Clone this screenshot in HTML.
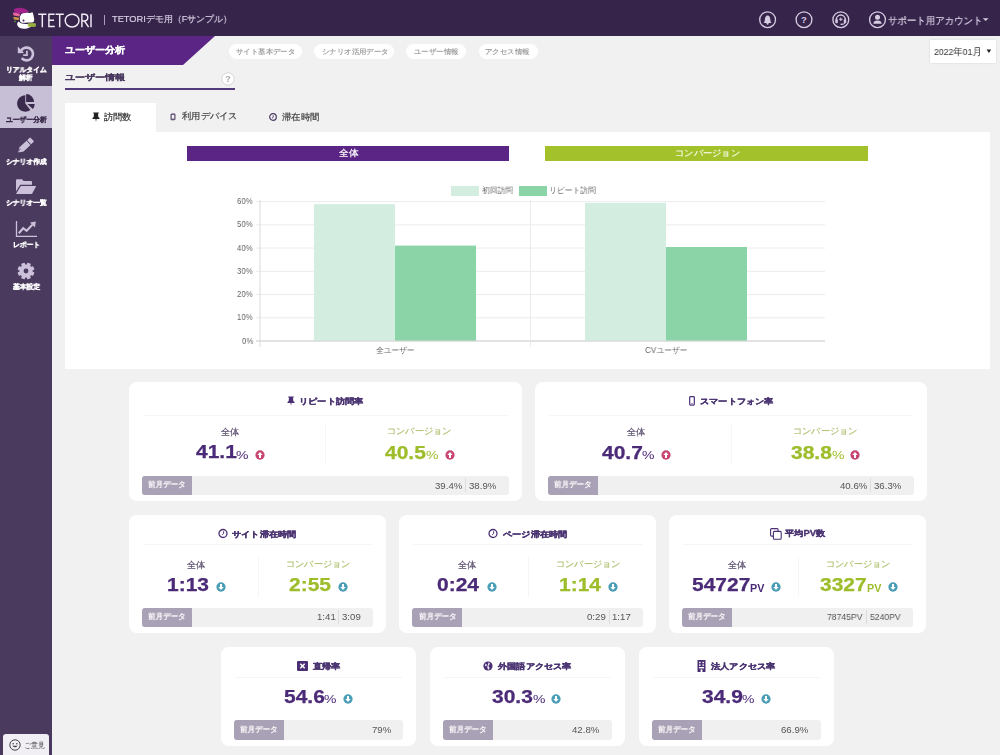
<!DOCTYPE html><html><head><meta charset="utf-8"><style>*{box-sizing:border-box;margin:0;padding:0}
html,body{width:1000px;height:755px;overflow:hidden;background:#f1f1f1;font-family:"Liberation Sans",sans-serif;position:relative}
.a{position:absolute}
.nw{white-space:nowrap}
.sl{position:absolute;left:0;width:52px;text-align:center;font-size:7.5px;font-weight:bold;color:#fff;line-height:9px;white-space:nowrap}
.pill{position:absolute;top:43.5px;height:15.5px;border-radius:8px;background:#fff;color:#9a9a9a;font-size:8.5px;line-height:16px;text-align:center;white-space:nowrap}
.tab{position:absolute;top:103px;height:29px;font-size:10.5px;color:#333;line-height:29px;white-space:nowrap}
.card{position:absolute;background:#fff;border-radius:8px}
.sep{position:absolute;height:1px;background:#f5f4f6}
.bar{position:absolute;height:19.5px;background:#f0f0f0;border-radius:3px;overflow:hidden}
.bar .bl{position:absolute;left:0;top:0;height:19.5px;width:50px;background:#a9a1b5;color:#fff;font-size:8.5px;line-height:19.5px;padding-left:5px;white-space:nowrap}
.bar .bv{position:absolute;top:0;height:19.5px;line-height:19.5px;font-size:9.5px;color:#555;white-space:nowrap}
.bar .bs{position:absolute;top:3px;width:1px;height:13px;background:#dcdcdc}
.t{position:absolute;white-space:nowrap;line-height:40px;transform-origin:0 0;will-change:transform}
</style></head><body><div class="a" style="left:0;top:0;width:1000px;height:36px;background:#37244b"></div>
<svg class="a" style="left:10px;top:5px" width="28" height="26" viewBox="10 5 28 26">
<path d="M14 9.2 Q15.5 7.8 19 7.7 Q23.5 7.6 26 9.2 Q28.2 10.5 28.7 11.6 L27 12.8 Q23 13.6 19.9 13.6 Q16.5 13.4 14.4 12.5 Z" fill="#a0228a"/>
<path d="M12.8 12.6 Q16.5 13 19.9 13.8 L19.5 16.4 Q16.5 15.8 13.6 15.4 Z" fill="#e8679c"/>
<path d="M13.2 17.1 Q16.2 17.3 19.1 17.8 L18.7 20 Q16.2 19.7 14 19.5 Z" fill="#d99a48"/>
<path d="M14 20.7 H16 L15.6 22.3 L14.4 22 Z" fill="#5f9a3c"/>
<path d="M20 16.5 Q20.8 13.6 23 13.2 Q26.5 12.5 31 13.1 L31.8 12 L32.7 12.5 Q33.6 15 34.2 18.8 Q34.4 21.2 33.4 22 Q31.8 22.9 28.7 22.4 Q25 22.9 21.9 22.8 Q19.8 22 19.8 19.5 Z" fill="#ffffff"/>
<path d="M18.3 21.6 Q16.8 23.5 17.2 25 Q18 27.5 20.5 28.3 Q23.5 29 27 28.4 Q30 27.6 31 26.5 Q30.5 24.8 29 24.3 Q26 24 22 23.6 Q20 23.2 19.5 22.3 Z" fill="#ffffff"/>
<circle cx="23.5" cy="20.4" r="1" fill="#37244b"/>
<rect x="27.9" y="23.3" width="7.9" height="3.4" rx="0.8" fill="#a4c23c"/>
<g fill="#37244b" opacity="0.6"><circle cx="30" cy="25" r="0.5"/><circle cx="32" cy="25" r="0.5"/><circle cx="34" cy="25" r="0.5"/></g>
</svg>
<svg class="a" style="left:35px;top:8px" width="62" height="24" viewBox="35 8 62 24">
<g fill="none" stroke="#f0ebf5" stroke-width="1.45">
<path d="M38.2 14.2 H46.4 M42.3 14.2 V27.2"/>
<path d="M54.6 14.2 H48.9 V26.5 H54.8 M48.9 20.3 H54"/>
<path d="M55.6 14.2 H63.8 M59.7 14.2 V27.2"/>
<ellipse cx="72.1" cy="20.6" rx="6.9" ry="6.4"/>
<path d="M81.9 27.2 V14.2 H84.3 Q87.8 14.2 87.8 17.6 Q87.8 21 84.3 21 H82 M84.5 21 L88.6 27.2"/>
<path d="M91 14.2 V27.2"/>
</g></svg>
<div class="a" style="left:104.3px;top:15px;width:1px;height:9.5px;background:#a99cbc"></div>
<svg class="a" style="left:750px;top:0px" width="250" height="36" viewBox="750 0 250 36">
<g fill="none" stroke="#d6cce2" stroke-width="1.35">
<circle cx="767.6" cy="19.7" r="7.9"/><circle cx="804" cy="19.7" r="7.9"/><circle cx="840.8" cy="19.7" r="7.9"/><circle cx="877.5" cy="19.7" r="7.9"/>
</g>
<path d="M763.6 23 Q764.8 21.8 764.9 19.5 Q765 15.6 767.6 15.4 Q770.2 15.6 770.3 19.5 Q770.4 21.8 771.6 23 Z" fill="#d6cce2"/>
<circle cx="767.6" cy="23.6" r="1.1" fill="#d6cce2"/>
<text x="804" y="23.3" text-anchor="middle" font-family="Liberation Sans" font-weight="bold" font-size="9.5" fill="#d6cce2">?</text>
<path d="M836.3 22.2 V19.6 A4.5 4.5 0 0 1 845.3 19.6 V22.2" fill="none" stroke="#d6cce2" stroke-width="1.5"/>
<rect x="835.4" y="19.2" width="2.4" height="4" rx="0.8" fill="#d6cce2"/><rect x="843.8" y="19.2" width="2.4" height="4" rx="0.8" fill="#d6cce2"/>
<path d="M845 22.5 Q845 24.3 842 24.3" fill="none" stroke="#d6cce2" stroke-width="1"/><rect x="840.6" y="23.6" width="2" height="1.4" fill="#d6cce2"/>
<path d="M840.8 17.5 V21 M839 19.3 H842.6" stroke="#d6cce2" stroke-width="1"/>
<circle cx="877.5" cy="17.3" r="2.5" fill="#d6cce2"/>
<path d="M873.3 23.8 Q873.5 20.4 877.5 20.4 Q881.5 20.4 881.7 23.8 Z" fill="#d6cce2"/>
<path d="M982.8 18.2 H988.6 L985.7 21 Z" fill="#d6cce2"/>
</svg>
<div class="a" style="left:0;top:36px;width:52px;height:719px;background:#4a3a5e"></div>
<div class="a" style="left:0;top:86px;width:52px;height:42px;background:#c7bfd5"></div>
<svg class="a" style="left:0;top:36px" width="52" height="260" viewBox="0 36 52 260">
<path d="M21.70 58.11 A6.4 6.4 0 1 0 20.80 51.30" fill="none" stroke="#cbc1da" stroke-width="2.6"/>
<path d="M17.8 46.6 L17.8 53.3 L24 53.1 Z" fill="#cbc1da"/>
<path d="M26.9 50.8 V55.2 H23.2" fill="none" stroke="#cbc1da" stroke-width="1.8"/>
<g fill="#3a2a4c">
<path d="M25.3 103.5 L25.3 95.3 A8.2 8.2 0 1 0 30.35 109.96 Z"/>
<path d="M26.1 102.1 L26.1 94.1 A8 8 0 0 1 34.1 102.1 Z"/>
<path d="M27.4 104.1 L34.7 104.1 A7.3 7.3 0 0 1 32.82 108.98 Z"/>
</g>
<g fill="#cbc1da">
<path d="M18.20 152.60 L19.54 147.33 L26.51 140.71 L30.51 144.92 L23.54 151.54 Z"/>
<path d="M27.09 140.16 L29.49 137.89 Q30.14 137.27 30.76 137.92 L33.52 140.82 Q34.14 141.48 33.48 142.10 L31.09 144.37 Z"/>
</g>
<path d="M18.96 150.50 L20.56 148.98" stroke="#4a3a5e" stroke-2.9idth="1.1"/>
<g fill="#cbc1da">
<path d="M16 180.3 Q16 179.3 17 179.3 H22 L23.6 181 H31 Q32 181 32 182 V184.8 H20.2 L16 191.5 Z"/>
<path d="M20.8 186 H36.2 L32 194.1 H16 Z"/>
</g>
<path d="M16.5 221 V236.3 H37" fill="none" stroke="#cbc1da" stroke-width="1.3"/>
<path d="M18.8 233.2 L23.2 228.2 L26.6 230.8 L32.4 224.8" fill="none" stroke="#cbc1da" stroke-width="2.1"/>
<path d="M30 222.4 L35.8 221.6 L35 227.4 Z" fill="#cbc1da"/>
<g fill="#cbc1da">
<rect x="24.1" y="262.6" width="3.8" height="3.6" rx="0.5" transform="rotate(22.5 26 271)"/><rect x="24.1" y="262.6" width="3.8" height="3.6" rx="0.5" transform="rotate(67.5 26 271)"/><rect x="24.1" y="262.6" width="3.8" height="3.6" rx="0.5" transform="rotate(112.5 26 271)"/><rect x="24.1" y="262.6" width="3.8" height="3.6" rx="0.5" transform="rotate(157.5 26 271)"/><rect x="24.1" y="262.6" width="3.8" height="3.6" rx="0.5" transform="rotate(202.5 26 271)"/><rect x="24.1" y="262.6" width="3.8" height="3.6" rx="0.5" transform="rotate(247.5 26 271)"/><rect x="24.1" y="262.6" width="3.8" height="3.6" rx="0.5" transform="rotate(292.5 26 271)"/><rect x="24.1" y="262.6" width="3.8" height="3.6" rx="0.5" transform="rotate(337.5 26 271)"/>
<circle cx="26" cy="271" r="6.6"/>
</g>
<circle cx="26" cy="271" r="2.4" fill="#4a3a5e"/>
</svg>
<div class="a" style="left:3px;top:734px;width:46px;height:21px;background:#f1eff3;border-radius:3px 3px 0 0"></div>
<svg class="a" style="left:9px;top:739px" width="12" height="12" viewBox="0 0 12 12"><circle cx="6" cy="6" r="5.2" fill="none" stroke="#444" stroke-width="1"/><circle cx="4.2" cy="4.8" r="0.8" fill="#444"/><circle cx="7.8" cy="4.8" r="0.8" fill="#444"/><path d="M3.3 6.8 Q6 9.8 8.7 6.8 Z" fill="#444"/></svg>

<svg class="a" style="left:52px;top:36px" width="165" height="29" viewBox="0 0 165 29"><path d="M0 0 H163 L131 29 H0 Z" fill="#5b2585"/></svg>
<div class="pill" style="left:228.5px;width:73.5px"></div>
<div class="pill" style="left:313.5px;width:80.5px"></div>
<div class="pill" style="left:406px;width:59.5px"></div>
<div class="pill" style="left:478.5px;width:59.5px"></div>
<div class="a" style="left:930px;top:40px;width:66px;height:23px;background:#fff;box-shadow:0 0 2px rgba(0,0,0,0.12)"></div>
<svg class="a" style="left:986px;top:49px" width="6" height="4" viewBox="0 0 6 4"><path d="M0.6 0.4 H5.2 L2.9 4 Z" fill="#222"/></svg>
<div class="a" style="left:65px;top:87.6px;width:170px;height:2px;background:#533b7e"></div>
<svg class="a" style="left:221px;top:72.3px;will-change:transform" width="14" height="14" viewBox="0 0 14 14"><circle cx="7" cy="7" r="6.2" fill="#fff" stroke="#d0d0d0" stroke-width="0.9"/><text x="7" y="10.4" text-anchor="middle" font-family="Liberation Sans" font-weight="bold" font-size="9" fill="#a8a8a8">?</text></svg>
<div class="a" style="left:65px;top:132px;width:925px;height:237px;background:#fff"></div>
<div class="a" style="left:65px;top:103px;width:91px;height:30px;background:#fff"></div>
<svg class="a" style="left:92px;top:112px" width="8" height="10" viewBox="0 0 8 10"><path d="M1.2 0.5 H6.8 V1.5 H6 L6.3 5 L7.5 6 V7 H4.5 L4 10 L3.5 7 H0.5 V6 L1.7 5 L2 1.5 H1.2 Z" fill="#222"/></svg>
<svg class="a" style="left:170px;top:113px" width="6" height="8" viewBox="0 0 6 8"><rect x="1.1" y="1.1" width="3.8" height="5.6" rx="0.6" fill="none" stroke="#4a3a60" stroke-width="1.1"/><rect x="2.4" y="5.4" width="1.2" height="0.7" fill="#4a3a60"/></svg>
<svg class="a" style="left:268.4px;top:111.6px" width="10" height="10" viewBox="0 0 10 10"><circle cx="5" cy="5" r="3.3" fill="none" stroke="#4a3a60" stroke-width="1.2"/><path d="M5.2 3.3 V5.3 L3.9 6.3" fill="none" stroke="#4a3a60" stroke-width="0.9"/></svg>
<div class="a" style="left:187px;top:146px;width:322px;height:15px;background:#5b2585;color:#fff;font-size:10px;line-height:15px;text-align:center"></div>
<div class="a" style="left:545px;top:146px;width:323px;height:15px;background:#a2c12a;color:#fff;font-size:10px;line-height:15px;text-align:center"></div>
<svg class="a" style="left:0;top:0" width="1000" height="370" viewBox="0 0 1000 370">
<line x1="256" y1="341.0" x2="825" y2="341.0" stroke="#d9d9d9" stroke-width="1"/><line x1="256" y1="317.8" x2="825" y2="317.8" stroke="#ececec" stroke-width="1"/><line x1="256" y1="294.6" x2="825" y2="294.6" stroke="#ececec" stroke-width="1"/><line x1="256" y1="271.3" x2="825" y2="271.3" stroke="#ececec" stroke-width="1"/><line x1="256" y1="248.1" x2="825" y2="248.1" stroke="#ececec" stroke-width="1"/><line x1="256" y1="224.9" x2="825" y2="224.9" stroke="#ececec" stroke-width="1"/><line x1="256" y1="201.7" x2="825" y2="201.7" stroke="#ececec" stroke-width="1"/>
<line x1="260" y1="200" x2="260" y2="347" stroke="#d9d9d9" stroke-width="1"/>
<line x1="530.5" y1="200" x2="530.5" y2="347" stroke="#ececec" stroke-width="1"/>
<rect x="314" y="204.2" width="81" height="136.8" fill="#d3ede0"/><rect x="395" y="245.6" width="81" height="95.4" fill="#8bd4a8"/><rect x="585" y="202.8" width="81" height="138.2" fill="#d3ede0"/><rect x="666" y="247.0" width="81" height="94.0" fill="#8bd4a8"/>
<line x1="256" y1="341" x2="825" y2="341" stroke="#d9d9d9" stroke-width="1"/>
<rect x="451" y="186" width="28" height="10" fill="#d3ede0"/>
<rect x="519" y="186" width="28" height="10" fill="#8bd4a8"/>
</svg>
<div class="card" style="left:129px;top:382px;width:392.5px;height:119px"></div>
<div class="sep" style="left:143px;top:415px;width:364.5px"></div>
<div class="a" style="left:325.2px;top:423.7px;width:1px;height:40px;background:#f6f6f6"></div>
<div class="card" style="left:535px;top:382px;width:391.5px;height:119px"></div>
<div class="sep" style="left:549px;top:415px;width:363.5px"></div>
<div class="a" style="left:730.8px;top:423.7px;width:1px;height:40px;background:#f6f6f6"></div>
<div class="card" style="left:129px;top:515px;width:257px;height:118px"></div>
<div class="sep" style="left:143px;top:543.5px;width:229px"></div>
<div class="a" style="left:257.5px;top:556.5px;width:1px;height:40px;background:#f6f6f6"></div>
<div class="card" style="left:399.4px;top:515px;width:256.6px;height:118px"></div>
<div class="sep" style="left:413.4px;top:543.5px;width:228.60000000000002px"></div>
<div class="a" style="left:527.7px;top:556.5px;width:1px;height:40px;background:#f6f6f6"></div>
<div class="card" style="left:669.2px;top:515px;width:256.79999999999995px;height:118px"></div>
<div class="sep" style="left:683.2px;top:543.5px;width:228.79999999999995px"></div>
<div class="a" style="left:797.6px;top:556.5px;width:1px;height:40px;background:#f6f6f6"></div>
<div class="card" style="left:221.3px;top:647.4px;width:195.0px;height:99px"></div>
<div class="sep" style="left:235.3px;top:676.9px;width:167.0px"></div>
<div class="card" style="left:429.5px;top:647.4px;width:195.0px;height:99px"></div>
<div class="sep" style="left:443.5px;top:676.9px;width:167.0px"></div>
<div class="card" style="left:639px;top:647.4px;width:195px;height:99px"></div>
<div class="sep" style="left:653px;top:676.9px;width:167px"></div>
<svg class="a" style="left:286.9px;top:396.3px" width="8" height="10" viewBox="0 0 8 10"><path d="M1.2 0.5 H6.8 V1.5 H6 L6.3 5 L7.5 6 V7 H4.5 L4 10 L3.5 7 H0.5 V6 L1.7 5 L2 1.5 H1.2 Z" fill="#4b2f74"/></svg>
<svg class="a" style="left:688.5px;top:396.3px" width="6" height="10" viewBox="0 0 6 10"><rect x="0.7" y="0.7" width="4.6" height="8.4" rx="0.8" fill="none" stroke="#4b2f74" stroke-width="1.2"/><rect x="2.3" y="7.3" width="1.4" height="0.8" fill="#4b2f74"/></svg>
<svg class="a" style="left:218.4px;top:528.3px" width="11" height="11" viewBox="0 0 11 11"><circle cx="5" cy="5.5" r="4" fill="none" stroke="#4b2f74" stroke-width="1.3"/><path d="M5.6 3.3 V5.6 L4.2 6.8" fill="none" stroke="#4b2f74" stroke-width="1"/></svg>
<svg class="a" style="left:488.48px;top:528.3px" width="11" height="11" viewBox="0 0 11 11"><circle cx="5" cy="5.5" r="4" fill="none" stroke="#4b2f74" stroke-width="1.3"/><path d="M5.6 3.3 V5.6 L4.2 6.8" fill="none" stroke="#4b2f74" stroke-width="1"/></svg>
<svg class="a" style="left:769.6px;top:527.8px" width="12" height="12" viewBox="0 0 12 12"><rect x="0.6" y="0.6" width="7.5" height="7.5" rx="1" fill="#fff" stroke="#4b2f74" stroke-width="1.1"/><rect x="3.4" y="3.4" width="7.8" height="7.8" rx="1" fill="#fff" stroke="#4b2f74" stroke-width="1.1"/></svg>
<svg class="a" style="left:297.08px;top:660.8px" width="11" height="10" viewBox="0 0 11 10"><rect x="0" y="0" width="11" height="10" rx="1" fill="#4b2f74"/><path d="M3.3 2.8 L7.7 7.2 M7.7 2.8 L3.3 7.2" stroke="#fff" stroke-width="1.5"/></svg>
<svg class="a" style="left:482.62px;top:660.8px" width="10" height="10" viewBox="0 0 10 10"><circle cx="5" cy="5" r="4.6" fill="#4b2f74"/><path d="M2.5 2.5 Q4 3 3.8 4.6 Q3 5.5 2 5 Z M5.5 1.2 Q7.5 2 6.5 3.5 Q5.5 4 5.6 5.5 Q7 6 6.3 8 Q5.5 9 5 8.8 Q4.6 7 4.2 6.5" fill="#fff" opacity="0.9"/></svg>
<svg class="a" style="left:697.05px;top:659.8px" width="9" height="12" viewBox="0 0 9 12"><rect x="0.5" y="0" width="8" height="12" rx="0.5" fill="#4b2f74"/><g fill="#fff"><rect x="2" y="1.8" width="1.6" height="1.4"/><rect x="5.4" y="1.8" width="1.6" height="1.4"/><rect x="2" y="4.4" width="1.6" height="1.4"/><rect x="5.4" y="4.4" width="1.6" height="1.4"/><rect x="2" y="7" width="5" height="1.4"/><rect x="3.6" y="9.4" width="1.8" height="2.6"/></g></svg>
<div class="bar" style="left:142px;top:475.9px;width:366.5px;height:18.8px"><div class="bl" style="height:18.8px"></div></div>
<div class="bar" style="left:548px;top:475.9px;width:365.5px;height:18.8px"><div class="bl" style="height:18.8px"></div></div>
<div class="bar" style="left:142px;top:607.5px;width:231px;height:19.3px"><div class="bl" style="height:19.3px"></div></div>
<div class="bar" style="left:412.4px;top:607.5px;width:230.60000000000002px;height:19.3px"><div class="bl" style="height:19.3px"></div></div>
<div class="bar" style="left:682.2px;top:607.5px;width:230.79999999999995px;height:19.3px"><div class="bl" style="height:19.3px"></div></div>
<div class="bar" style="left:234.3px;top:720.3px;width:169.0px;height:19.4px"><div class="bl" style="height:19.4px"></div></div>
<div class="bar" style="left:442.5px;top:720.3px;width:169.0px;height:19.4px"><div class="bl" style="height:19.4px"></div></div>
<div class="bar" style="left:652px;top:720.3px;width:169px;height:19.4px"><div class="bl" style="height:19.4px"></div></div>
<div class="a" style="left:465.25px;top:478.4px;width:1px;height:13.8px;background:#dddddd"></div>
<div class="a" style="left:870.25px;top:478.4px;width:1px;height:13.8px;background:#dddddd"></div>
<div class="a" style="left:338.25px;top:610.0px;width:1px;height:14.3px;background:#dddddd"></div>
<div class="a" style="left:608.5px;top:610.0px;width:1px;height:14.3px;background:#dddddd"></div>
<div class="a" style="left:865.75px;top:610.0px;width:1px;height:14.3px;background:#dddddd"></div>
<svg class="a" style="left:255.10px;top:450.10px" width="10" height="10" viewBox="0 0 10 10"><circle cx="5" cy="5" r="4.65" fill="#c8456f"/><path d="M5 2.1 L7.7 5 H6 V7.9 H4 V5 H2.3 Z" fill="#fff"/></svg>
<svg class="a" style="left:444.60px;top:450.10px" width="10" height="10" viewBox="0 0 10 10"><circle cx="5" cy="5" r="4.65" fill="#c8456f"/><path d="M5 2.1 L7.7 5 H6 V7.9 H4 V5 H2.3 Z" fill="#fff"/></svg>
<svg class="a" style="left:660.97px;top:450.10px" width="10" height="10" viewBox="0 0 10 10"><circle cx="5" cy="5" r="4.65" fill="#c8456f"/><path d="M5 2.1 L7.7 5 H6 V7.9 H4 V5 H2.3 Z" fill="#fff"/></svg>
<svg class="a" style="left:850.47px;top:450.10px" width="10" height="10" viewBox="0 0 10 10"><circle cx="5" cy="5" r="4.65" fill="#c8456f"/><path d="M5 2.1 L7.7 5 H6 V7.9 H4 V5 H2.3 Z" fill="#fff"/></svg>
<svg class="a" style="left:215.50px;top:582.40px" width="10" height="10" viewBox="0 0 10 10"><circle cx="5" cy="5" r="4.65" fill="#4b9db6"/><path d="M5 7.9 L7.7 5 H6 V2.1 H4 V5 H2.3 Z" fill="#fff"/></svg>
<svg class="a" style="left:337.98px;top:582.40px" width="10" height="10" viewBox="0 0 10 10"><circle cx="5" cy="5" r="4.65" fill="#4b9db6"/><path d="M5 7.9 L7.7 5 H6 V2.1 H4 V5 H2.3 Z" fill="#fff"/></svg>
<svg class="a" style="left:486.52px;top:582.40px" width="10" height="10" viewBox="0 0 10 10"><circle cx="5" cy="5" r="4.65" fill="#4b9db6"/><path d="M5 7.9 L7.7 5 H6 V2.1 H4 V5 H2.3 Z" fill="#fff"/></svg>
<svg class="a" style="left:608.37px;top:582.40px" width="10" height="10" viewBox="0 0 10 10"><circle cx="5" cy="5" r="4.65" fill="#4b9db6"/><path d="M5 7.9 L7.7 5 H6 V2.1 H4 V5 H2.3 Z" fill="#fff"/></svg>
<svg class="a" style="left:771.18px;top:582.40px" width="10" height="10" viewBox="0 0 10 10"><circle cx="5" cy="5" r="4.65" fill="#4b9db6"/><path d="M5 7.9 L7.7 5 H6 V2.1 H4 V5 H2.3 Z" fill="#fff"/></svg>
<svg class="a" style="left:887.53px;top:582.40px" width="10" height="10" viewBox="0 0 10 10"><circle cx="5" cy="5" r="4.65" fill="#4b9db6"/><path d="M5 7.9 L7.7 5 H6 V2.1 H4 V5 H2.3 Z" fill="#fff"/></svg>
<svg class="a" style="left:343.12px;top:694.40px" width="10" height="10" viewBox="0 0 10 10"><circle cx="5" cy="5" r="4.65" fill="#4b9db6"/><path d="M5 7.9 L7.7 5 H6 V2.1 H4 V5 H2.3 Z" fill="#fff"/></svg>
<svg class="a" style="left:551.45px;top:694.40px" width="10" height="10" viewBox="0 0 10 10"><circle cx="5" cy="5" r="4.65" fill="#4b9db6"/><path d="M5 7.9 L7.7 5 H6 V2.1 H4 V5 H2.3 Z" fill="#fff"/></svg>
<svg class="a" style="left:760.95px;top:694.40px" width="10" height="10" viewBox="0 0 10 10"><circle cx="5" cy="5" r="4.65" fill="#4b9db6"/><path d="M5 7.9 L7.7 5 H6 V2.1 H4 V5 H2.3 Z" fill="#fff"/></svg>
<div class="t" style="left:112.45px;top:-0.55px;font-size:9.268px;-webkit-text-stroke:0.2px #d8cfe3;color:#d8cfe3;transform:scaleX(0.9986)">TETORIデモ用（Fサンプル）</div>
<div class="t" style="left:888.2px;top:0.55px;font-size:10.111px;-webkit-text-stroke:0.2px #d8cfe3;color:#d8cfe3;transform:scaleX(0.9448)">サポート用アカウント</div>
<div class="t" style="left:64.75px;top:29.5px;font-size:8.5px;font-weight:bold;-webkit-text-stroke:0.3px #ffffff;color:#ffffff;transform:scaleX(1.1198)">ユーザー分析</div>
<div class="t" style="left:64.75px;top:57.55px;font-size:7.512px;font-weight:bold;-webkit-text-stroke:0.3px #4b3a60;color:#4b3a60;transform:scaleX(1.262)">ユーザー情報</div>
<div class="t" style="left:235.65px;top:32.4px;font-size:6.5px;font-weight:bold;color:#a3a3a3;transform:scaleX(1.055)">サイト基本データ</div>
<div class="t" style="left:321.58px;top:32.4px;font-size:6.5px;font-weight:bold;color:#a3a3a3;transform:scaleX(1.055)">シナリオ活用データ</div>
<div class="t" style="left:414.3px;top:32.4px;font-size:6.5px;font-weight:bold;color:#a3a3a3;transform:scaleX(1.055)">ユーザー情報</div>
<div class="t" style="left:485.48px;top:32.4px;font-size:6.5px;font-weight:bold;color:#a3a3a3;transform:scaleX(1.055)">アクセス情報</div>
<div class="t" style="left:934.3px;top:32.3px;font-size:9.514px;color:#333333;transform:scaleX(0.9181)">2022年01月</div>
<div class="t" style="left:104.2px;top:96.95px;font-size:9.263px;-webkit-text-stroke:0.2px #333333;color:#333333;transform:scaleX(1.0243)">訪問数</div>
<div class="t" style="left:181.8px;top:96.45px;font-size:9.026px;-webkit-text-stroke:0.2px #444444;color:#444444;transform:scaleX(1.0288)">利用デバイス</div>
<div class="t" style="left:282.15px;top:96.65px;font-size:8.821px;-webkit-text-stroke:0.2px #444444;color:#444444;transform:scaleX(1.0481)">滞在時間</div>
<div class="t" style="left:338.55px;top:133.2px;font-size:8.649px;-webkit-text-stroke:0.2px #ffffff;color:#ffffff;transform:scaleX(1.0851)">全体</div>
<div class="t" style="left:674.5px;top:132.5px;font-size:9.091px;-webkit-text-stroke:0.2px #f3f7dc;color:#f3f7dc;transform:scaleX(1.0313)">コンバージョン</div>
<div class="t" style="left:237.1px;top:180.95px;font-size:9.792px;color:#666666;transform:scaleX(0.7992)">60%</div>
<div class="t" style="left:241.6px;top:320.55px;font-size:9.792px;color:#666666;transform:scaleX(0.7992)">0%</div>
<div class="t" style="left:237.1px;top:297.33px;font-size:9.792px;color:#666666;transform:scaleX(0.7992)">10%</div>
<div class="t" style="left:237.1px;top:274.11px;font-size:9.792px;color:#666666;transform:scaleX(0.7992)">20%</div>
<div class="t" style="left:237.1px;top:250.89px;font-size:9.792px;color:#666666;transform:scaleX(0.7992)">30%</div>
<div class="t" style="left:237.1px;top:227.67px;font-size:9.792px;color:#666666;transform:scaleX(0.7992)">40%</div>
<div class="t" style="left:237.1px;top:204.45px;font-size:9.792px;color:#666666;transform:scaleX(0.7992)">50%</div>
<div class="t" style="left:375.75px;top:329.75px;font-size:8.471px;color:#666666;transform:scaleX(0.9619)">全ユーザー</div>
<div class="t" style="left:644.55px;top:329.75px;font-size:8.471px;color:#666666;transform:scaleX(0.9619)">CVユーザー</div>
<div class="t" style="left:482.35px;top:171.2px;font-size:7.714px;color:#666666;transform:scaleX(0.9788)">初回訪問</div>
<div class="t" style="left:548.85px;top:171.2px;font-size:7.714px;color:#666666;transform:scaleX(0.9788)">リピート訪問</div>
<div class="t" style="left:5.65px;top:49.5px;font-size:6.569px;font-weight:bold;-webkit-text-stroke:0.3px #ffffff;color:#ffffff;transform:scaleX(0.9699)">リアルタイム</div>
<div class="t" style="left:19.4px;top:58.0px;font-size:6.569px;font-weight:bold;-webkit-text-stroke:0.3px #ffffff;color:#ffffff;transform:scaleX(0.9699)">解析</div>
<div class="t" style="left:5.77px;top:100.4px;font-size:6.569px;font-weight:bold;-webkit-text-stroke:0.3px #3a2a4c;color:#3a2a4c;transform:scaleX(0.9699)">ユーザー分析</div>
<div class="t" style="left:5.82px;top:141.8px;font-size:6.569px;font-weight:bold;-webkit-text-stroke:0.3px #ffffff;color:#ffffff;transform:scaleX(0.9699)">シナリオ作成</div>
<div class="t" style="left:5.95px;top:183.25px;font-size:6.569px;font-weight:bold;-webkit-text-stroke:0.3px #ffffff;color:#ffffff;transform:scaleX(0.9699)">シナリオ一覧</div>
<div class="t" style="left:13.2px;top:224.95px;font-size:6.569px;font-weight:bold;-webkit-text-stroke:0.3px #ffffff;color:#ffffff;transform:scaleX(0.9699)">レポート</div>
<div class="t" style="left:12.88px;top:266.8px;font-size:6.569px;font-weight:bold;-webkit-text-stroke:0.3px #ffffff;color:#ffffff;transform:scaleX(0.9699)">基本設定</div>
<div class="t" style="left:23.75px;top:725.75px;font-size:7.778px;color:#444444;transform:scaleX(0.8664)">ご意見</div>
<div class="t" style="left:221.15px;top:412.2px;font-size:9.212px;-webkit-text-stroke:0.15px #55486a;color:#55486a;transform:scaleX(1.0251)">全体</div>
<div class="t" style="left:387.15px;top:411.2px;font-size:9.212px;-webkit-text-stroke:0.15px #adc06f;color:#adc06f;transform:scaleX(1.0251)">コンバージョン</div>
<div class="t" style="left:148.15px;top:465.45px;font-size:7.845px;-webkit-text-stroke:0.25px #ffffff;color:#ffffff;transform:scaleX(0.9405)">前月データ</div>
<div class="t" style="left:627.15px;top:412.2px;font-size:9.212px;-webkit-text-stroke:0.15px #55486a;color:#55486a;transform:scaleX(1.0251)">全体</div>
<div class="t" style="left:793.15px;top:411.2px;font-size:9.212px;-webkit-text-stroke:0.15px #adc06f;color:#adc06f;transform:scaleX(1.0251)">コンバージョン</div>
<div class="t" style="left:554.15px;top:465.45px;font-size:7.845px;-webkit-text-stroke:0.25px #ffffff;color:#ffffff;transform:scaleX(0.9405)">前月データ</div>
<div class="t" style="left:187.35px;top:545.0px;font-size:9.212px;-webkit-text-stroke:0.15px #55486a;color:#55486a;transform:scaleX(1.0251)">全体</div>
<div class="t" style="left:285.95px;top:544.0px;font-size:9.212px;-webkit-text-stroke:0.15px #adc06f;color:#adc06f;transform:scaleX(1.0251)">コンバージョン</div>
<div class="t" style="left:148.15px;top:597.05px;font-size:7.845px;-webkit-text-stroke:0.25px #ffffff;color:#ffffff;transform:scaleX(0.9405)">前月データ</div>
<div class="t" style="left:457.75px;top:545.0px;font-size:9.212px;-webkit-text-stroke:0.15px #55486a;color:#55486a;transform:scaleX(1.0251)">全体</div>
<div class="t" style="left:556.35px;top:544.0px;font-size:9.212px;-webkit-text-stroke:0.15px #adc06f;color:#adc06f;transform:scaleX(1.0251)">コンバージョン</div>
<div class="t" style="left:418.55px;top:597.05px;font-size:7.845px;-webkit-text-stroke:0.25px #ffffff;color:#ffffff;transform:scaleX(0.9405)">前月データ</div>
<div class="t" style="left:727.55px;top:545.0px;font-size:9.212px;-webkit-text-stroke:0.15px #55486a;color:#55486a;transform:scaleX(1.0251)">全体</div>
<div class="t" style="left:826.15px;top:544.0px;font-size:9.212px;-webkit-text-stroke:0.15px #adc06f;color:#adc06f;transform:scaleX(1.0251)">コンバージョン</div>
<div class="t" style="left:688.35px;top:597.05px;font-size:7.845px;-webkit-text-stroke:0.25px #ffffff;color:#ffffff;transform:scaleX(0.9405)">前月データ</div>
<div class="t" style="left:240.45px;top:709.85px;font-size:7.845px;-webkit-text-stroke:0.25px #ffffff;color:#ffffff;transform:scaleX(0.9405)">前月データ</div>
<div class="t" style="left:448.65px;top:709.85px;font-size:7.845px;-webkit-text-stroke:0.25px #ffffff;color:#ffffff;transform:scaleX(0.9405)">前月データ</div>
<div class="t" style="left:658.15px;top:709.85px;font-size:7.845px;-webkit-text-stroke:0.25px #ffffff;color:#ffffff;transform:scaleX(0.9405)">前月データ</div>
<div class="t" style="left:299.1px;top:381.25px;font-size:8.293px;font-weight:bold;-webkit-text-stroke:0.3px #4b3572;color:#4b3572;transform:scaleX(1.1492)">リピート訪問率</div>
<div class="t" style="left:699.5px;top:381.25px;font-size:8.293px;font-weight:bold;-webkit-text-stroke:0.3px #4b3572;color:#4b3572;transform:scaleX(1.1492)">スマートフォン率</div>
<div class="t" style="left:232.35px;top:513.5px;font-size:8.293px;font-weight:bold;-webkit-text-stroke:0.3px #4b3572;color:#4b3572;transform:scaleX(1.1492)">サイト滞在時間</div>
<div class="t" style="left:502.68px;top:513.5px;font-size:8.293px;font-weight:bold;-webkit-text-stroke:0.3px #4b3572;color:#4b3572;transform:scaleX(1.1492)">ページ滞在時間</div>
<div class="t" style="left:785.1px;top:513.25px;font-size:8.293px;font-weight:bold;-webkit-text-stroke:0.3px #4b3572;color:#4b3572;transform:scaleX(1.1492)">平均PV数</div>
<div class="t" style="left:312.77px;top:645.75px;font-size:8.293px;font-weight:bold;-webkit-text-stroke:0.3px #4b3572;color:#4b3572;transform:scaleX(1.1492)">直帰率</div>
<div class="t" style="left:497.88px;top:645.75px;font-size:8.293px;font-weight:bold;-webkit-text-stroke:0.3px #4b3572;color:#4b3572;transform:scaleX(1.1492)">外国語アクセス率</div>
<div class="t" style="left:711.45px;top:645.75px;font-size:8.293px;font-weight:bold;-webkit-text-stroke:0.3px #4b3572;color:#4b3572;transform:scaleX(1.1492)">法人アクセス率</div>
<div class="t" style="left:195.8px;top:432.35px;font-size:17.788px;font-weight:bold;-webkit-text-stroke:0.25px #4b2a78;color:#4b2a78;transform:scaleX(1.1803)">41.1</div>
<div class="t" style="left:236.45px;top:434.8px;font-size:11.782px;color:#4b2a78;transform:scaleX(1.1857)">%</div>
<div class="t" style="left:385.3px;top:432.6px;font-size:17.788px;font-weight:bold;-webkit-text-stroke:0.25px #9dbd2b;color:#9dbd2b;transform:scaleX(1.1803)">40.5</div>
<div class="t" style="left:425.95px;top:434.8px;font-size:11.782px;color:#9dbd2b;transform:scaleX(1.1857)">%</div>
<div class="t" style="left:601.92px;top:432.6px;font-size:17.788px;font-weight:bold;-webkit-text-stroke:0.25px #4b2a78;color:#4b2a78;transform:scaleX(1.1803)">40.7</div>
<div class="t" style="left:642.32px;top:434.8px;font-size:11.782px;color:#4b2a78;transform:scaleX(1.1857)">%</div>
<div class="t" style="left:791.18px;top:432.6px;font-size:17.788px;font-weight:bold;-webkit-text-stroke:0.25px #9dbd2b;color:#9dbd2b;transform:scaleX(1.1803)">38.8</div>
<div class="t" style="left:831.82px;top:434.8px;font-size:11.782px;color:#9dbd2b;transform:scaleX(1.1857)">%</div>
<div class="t" style="left:166.8px;top:564.8px;font-size:17.788px;font-weight:bold;-webkit-text-stroke:0.25px #4b2a78;color:#4b2a78;transform:scaleX(1.1803)">1:13</div>
<div class="t" style="left:289.02px;top:564.8px;font-size:17.788px;font-weight:bold;-webkit-text-stroke:0.25px #9dbd2b;color:#9dbd2b;transform:scaleX(1.1803)">2:55</div>
<div class="t" style="left:437.08px;top:564.8px;font-size:17.788px;font-weight:bold;-webkit-text-stroke:0.25px #4b2a78;color:#4b2a78;transform:scaleX(1.1803)">0:24</div>
<div class="t" style="left:558.92px;top:564.55px;font-size:17.788px;font-weight:bold;-webkit-text-stroke:0.25px #9dbd2b;color:#9dbd2b;transform:scaleX(1.1803)">1:14</div>
<div class="t" style="left:692.03px;top:564.8px;font-size:17.788px;font-weight:bold;-webkit-text-stroke:0.25px #4b2a78;color:#4b2a78;transform:scaleX(1.1803)">54727</div>
<div class="t" style="left:750.28px;top:567.7px;font-size:10.714px;font-weight:bold;color:#4b2a78;transform:scaleX(1.008)">PV</div>
<div class="t" style="left:820.13px;top:564.8px;font-size:17.788px;font-weight:bold;-webkit-text-stroke:0.25px #9dbd2b;color:#9dbd2b;transform:scaleX(1.1803)">3327</div>
<div class="t" style="left:866.63px;top:567.7px;font-size:10.714px;font-weight:bold;color:#9dbd2b;transform:scaleX(1.008)">PV</div>
<div class="t" style="left:284.08px;top:676.9px;font-size:17.788px;font-weight:bold;-webkit-text-stroke:0.25px #4b2a78;color:#4b2a78;transform:scaleX(1.1803)">54.6</div>
<div class="t" style="left:324.47px;top:679.1px;font-size:11.782px;color:#4b2a78;transform:scaleX(1.1857)">%</div>
<div class="t" style="left:492.4px;top:676.9px;font-size:17.788px;font-weight:bold;-webkit-text-stroke:0.25px #4b2a78;color:#4b2a78;transform:scaleX(1.1803)">30.3</div>
<div class="t" style="left:532.8px;top:679.1px;font-size:11.782px;color:#4b2a78;transform:scaleX(1.1857)">%</div>
<div class="t" style="left:701.9px;top:676.9px;font-size:17.788px;font-weight:bold;-webkit-text-stroke:0.25px #4b2a78;color:#4b2a78;transform:scaleX(1.1803)">34.9</div>
<div class="t" style="left:742.3px;top:679.1px;font-size:11.782px;color:#4b2a78;transform:scaleX(1.1857)">%</div>
<div class="t" style="left:468.75px;top:465.65px;font-size:9.648px;color:#555555;transform:scaleX(0.9931)">38.9%</div>
<div class="t" style="left:435.0px;top:465.65px;font-size:9.648px;color:#555555;transform:scaleX(0.9931)">39.4%</div>
<div class="t" style="left:873.75px;top:465.65px;font-size:9.648px;color:#555555;transform:scaleX(0.9931)">36.3%</div>
<div class="t" style="left:840.0px;top:465.65px;font-size:9.648px;color:#555555;transform:scaleX(0.9931)">40.6%</div>
<div class="t" style="left:341.75px;top:597.25px;font-size:9.648px;color:#555555;transform:scaleX(0.9931)">3:09</div>
<div class="t" style="left:316.5px;top:597.25px;font-size:9.648px;color:#555555;transform:scaleX(0.9931)">1:41</div>
<div class="t" style="left:611.75px;top:597.25px;font-size:9.648px;color:#555555;transform:scaleX(0.9931)">1:17</div>
<div class="t" style="left:586.75px;top:597.25px;font-size:9.648px;color:#555555;transform:scaleX(0.9931)">0:29</div>
<div class="t" style="left:869.5px;top:597.25px;font-size:9.648px;color:#555555;transform:scaleX(0.8938)">5240PV</div>
<div class="t" style="left:827.0px;top:597.25px;font-size:9.648px;color:#555555;transform:scaleX(0.8938)">78745PV</div>
<div class="t" style="left:371.55px;top:710.05px;font-size:9.648px;color:#555555;transform:scaleX(0.9931)">79%</div>
<div class="t" style="left:571.75px;top:710.05px;font-size:9.648px;color:#555555;transform:scaleX(0.9931)">42.8%</div>
<div class="t" style="left:781.25px;top:710.05px;font-size:9.648px;color:#555555;transform:scaleX(0.9931)">66.9%</div>
</body></html>
